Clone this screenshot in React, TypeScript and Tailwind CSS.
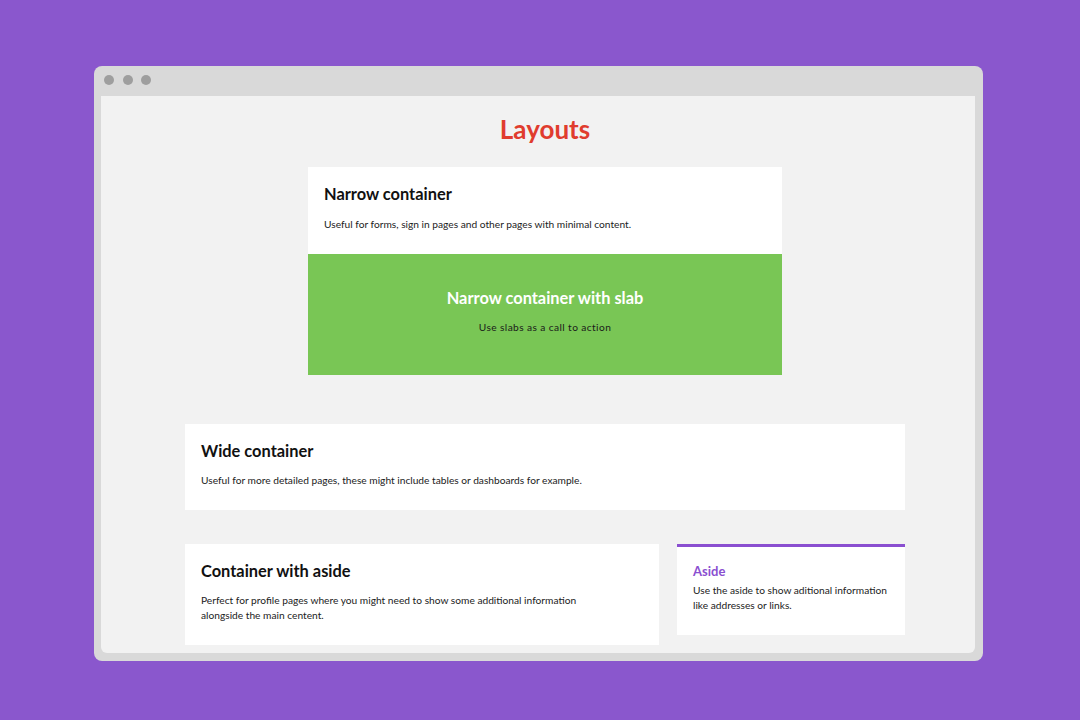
export default function App() {
  return (
    <div className="w-[1080px] h-[720px] bg-[#8a57cd] pt-[66px] pl-[94px] overflow-hidden" style={{ fontFamily: 'Lato, "Noto Sans", sans-serif' }}>
      <div className="w-[889px] h-[595px] bg-[#d9d9d9] rounded-[8px] flex flex-col px-[7px] pb-[8px]">
        <div className="h-[30px] flex items-center gap-[8.5px] pl-[3px] pb-[2px]">
          <span className="w-[10px] h-[10px] rounded-full bg-[#9e9e9e]" />
          <span className="w-[10px] h-[10px] rounded-full bg-[#9e9e9e]" />
          <span className="w-[10px] h-[10px] rounded-full bg-[#9e9e9e]" />
        </div>
        <div className="flex-1 w-[874px] bg-[#f2f2f2] rounded-b-[6px] overflow-hidden">
          <div className="w-[720px] ml-[84px] flex flex-col">
            <h1 className="text-center text-[26px] leading-[32px] font-bold text-[#e03c2e] mt-[17px]">Layouts</h1>
            <div className="w-[474px] mx-auto mt-[22px]">
              <div className="bg-white px-4 pt-4 pb-[22px]">
                <h2 className="text-[16.4px] leading-[22px] font-bold text-[#111]">Narrow container</h2>
                <p className="text-[10.2px] leading-[15px] text-[#222] mt-[12px]">Useful for forms, sign in pages and other pages with minimal content.</p>
              </div>
              <div className="bg-[#79c655] h-[121px] pt-[33px] text-center">
                <h2 className="text-[16.4px] leading-[22px] font-bold text-white">Narrow container with slab</h2>
                <p className="text-[10.2px] leading-[15px] text-[#1a1a1a] mt-[11px] tracking-[0.4px]">Use slabs as a call to action</p>
              </div>
            </div>
            <div className="bg-white mt-[49px] px-4 pt-4 pb-[22px]">
              <h2 className="text-[16.4px] leading-[22px] font-bold text-[#111]">Wide container</h2>
              <p className="text-[10.2px] leading-[15px] text-[#222] mt-[11px]">Useful for more detailed pages, these might include tables or dashboards for example.</p>
            </div>
            <div className="flex gap-[18px] mt-[34px] items-start">
              <div className="w-[474px] bg-white px-4 pt-4 pb-[22px]">
                <h2 className="text-[16.4px] leading-[22px] font-bold text-[#111]">Container with aside</h2>
                <p className="text-[10.2px] leading-[15px] text-[#222] mt-[11px]">Perfect for profile pages where you might need to show some additional information<br />alongside the main centent.</p>
              </div>
              <div className="w-[228px] bg-white border-t-[3px] border-[#8a4fd0] px-4 pt-[15px] pb-[22px]">
                <h3 className="text-[13px] leading-[18px] font-bold text-[#8a4fd0]">Aside</h3>
                <p className="text-[10.2px] leading-[15px] text-[#222] mt-[3px]">Use the aside to show aditional information like addresses or links.</p>
              </div>
            </div>
          </div>
        </div>
      </div>
    </div>
  );
}
